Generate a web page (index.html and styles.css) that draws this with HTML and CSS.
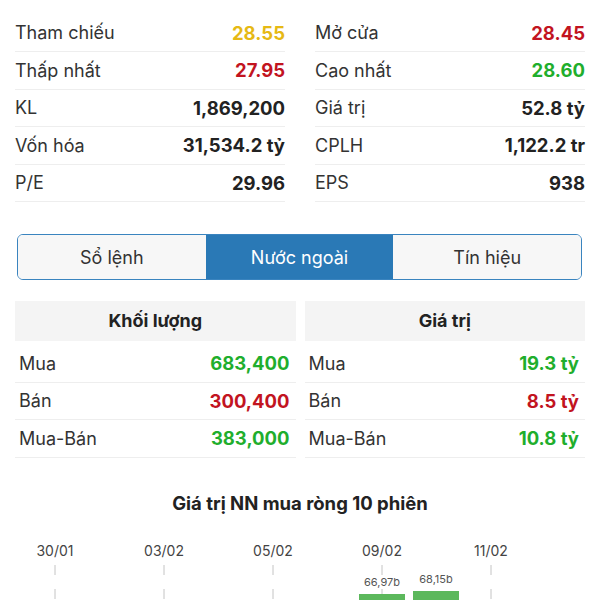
FILE: index.html
```html
<!DOCTYPE html>
<html lang="vi">
<head>
    <meta charset="UTF-8">
    <meta name="viewport" content="width=device-width, initial-scale=1.0">
    <title>Chi tiết cổ phiếu</title>
    <link rel="stylesheet" href="styles.css">
</head>
<body>
    <div class="page">
        <section class="stats">
            <div class="stat-col">
                <div class="stat-row"><span>Tham chiếu</span><strong class="ref">28.55</strong></div>
                <div class="stat-row"><span>Thấp nhất</span><strong class="down">27.95</strong></div>
                <div class="stat-row"><span>KL</span><strong>1,869,200</strong></div>
                <div class="stat-row"><span>Vốn hóa</span><strong>31,534.2 tỷ</strong></div>
                <div class="stat-row"><span>P/E</span><strong>29.96</strong></div>
            </div>
            <div class="stat-col">
                <div class="stat-row"><span>Mở cửa</span><strong class="down">28.45</strong></div>
                <div class="stat-row"><span>Cao nhất</span><strong class="up">28.60</strong></div>
                <div class="stat-row"><span>Giá trị</span><strong>52.8 tỷ</strong></div>
                <div class="stat-row"><span>CPLH</span><strong>1,122.2 tr</strong></div>
                <div class="stat-row"><span>EPS</span><strong>938</strong></div>
            </div>
        </section>

        <div class="tabs">
            <div class="tab">Sổ lệnh</div>
            <div class="tab active">Nước ngoài</div>
            <div class="tab">Tín hiệu</div>
        </div>

        <section class="foreign">
            <div class="ftable">
                <div class="ftable-head">Khối lượng</div>
                <div class="frow"><span>Mua</span><strong class="up">683,400</strong></div>
                <div class="frow"><span>Bán</span><strong class="down">300,400</strong></div>
                <div class="frow"><span>Mua-Bán</span><strong class="up">383,000</strong></div>
            </div>
            <div class="ftable">
                <div class="ftable-head">Giá trị</div>
                <div class="frow"><span>Mua</span><strong class="up">19.3 tỷ</strong></div>
                <div class="frow"><span>Bán</span><strong class="down">8.5 tỷ</strong></div>
                <div class="frow"><span>Mua-Bán</span><strong class="up">10.8 tỷ</strong></div>
            </div>
        </section>

        <section class="chart">
            <h3>Giá trị NN mua ròng 10 phiên</h3>
            <svg class="chart-svg" width="570" height="110" viewBox="0 0 570 110">
                <g class="grid">
                    <line x1="40" y1="35" x2="40" y2="110"/>
                    <line x1="149" y1="35" x2="149" y2="110"/>
                    <line x1="258" y1="35" x2="258" y2="110"/>
                    <line x1="367" y1="35" x2="367" y2="110"/>
                    <line x1="476" y1="35" x2="476" y2="110"/>
                </g>
                <g class="dates">
                    <text x="40" y="26">30/01</text>
                    <text x="149" y="26">03/02</text>
                    <text x="258" y="26">05/02</text>
                    <text x="367" y="26">09/02</text>
                    <text x="476" y="26">11/02</text>
                </g>
                <g class="bars">
                    <rect x="344" y="64" width="46" height="46"/>
                    <rect x="398" y="61" width="46" height="49"/>
                </g>
                <g class="bar-labels">
                    <text x="367" y="56">66,97b</text>
                    <text x="421" y="53">68,15b</text>
                </g>
            </svg>
        </section>
    </div>
</body>
</html>
```

FILE: styles.css
```css
body {
    margin: 0;
    padding: 0;
    background: #fff;
    font-family: Inter, "Noto Sans", sans-serif;
    color: #333;
}
.page {
    padding: 14.5px 15px 0;
}

/* top stats */
.stats {
    display: grid;
    grid-template-columns: 1fr 1fr;
    column-gap: 30px;
}
.stat-row {
    display: flex;
    justify-content: space-between;
    align-items: center;
    height: 37.5px;
    box-sizing: border-box;
    border-bottom: 1px solid #eeeeee;
    font-size: 18px;
}
.stat-row strong, .frow strong {
    font-weight: 700;
    font-size: 18.5px;
    color: #222;
}
.ref { color: #e6b914 !important; }
.up { color: #1fae2d !important; }
.down { color: #c2141f !important; }

/* tabs */
.tabs {
    display: flex;
    height: 46px;
    box-sizing: border-box;
    margin: 32px 3px 0 2px;
    border: 1px solid #3a84bf;
    border-radius: 6px;
    overflow: hidden;
}
.tab {
    flex: 1;
    display: flex;
    align-items: center;
    justify-content: center;
    background: #f7f7f7;
    font-size: 18px;
    color: #333;
}
.tab.active {
    background: #2a79b6;
    color: #fff;
}

/* foreign trading */
.foreign {
    display: grid;
    grid-template-columns: 1fr 1fr;
    column-gap: 9px;
    margin-top: 21px;
}
.ftable-head {
    height: 40px;
    line-height: 40px;
    margin-bottom: 4px;
    background: #f4f4f4;
    text-align: center;
    font-size: 18px;
    font-weight: 700;
    color: #222;
}
.frow {
    display: flex;
    justify-content: space-between;
    align-items: center;
    height: 37.5px;
    box-sizing: border-box;
    padding: 0 6px 0 4px;
    border-bottom: 1px solid #eeeeee;
    font-size: 18px;
}

/* chart */
.chart h3 {
    margin: 33.5px 0 15px;
    line-height: 24px;
    text-align: center;
    font-size: 18.5px;
    font-weight: 700;
    color: #222;
}
.chart-svg {
    display: block;
}
.grid line {
    stroke: #c4c4c4;
    stroke-width: 1;
    stroke-dasharray: 10 14;
}
.dates text {
    font-size: 14px;
    fill: #444;
    text-anchor: middle;
}
.bars rect {
    fill: #5cb85c;
}
.bar-labels text {
    font-size: 11px;
    fill: #555;
    text-anchor: middle;
}
```
